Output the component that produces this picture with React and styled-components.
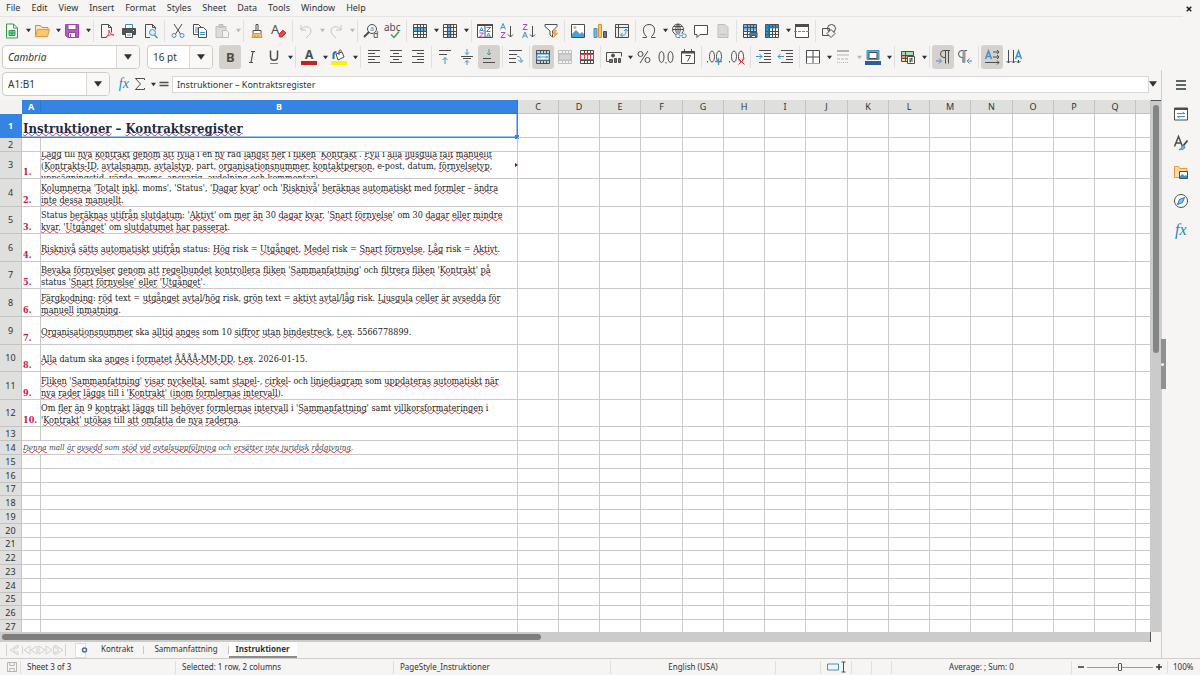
import React from 'react';
import styled, { createGlobalStyle, css } from 'styled-components';

const GlobalStyle = createGlobalStyle`
  *,
  *::before,
  *::after {
    box-sizing: border-box;
  }
  body {
    margin: 0;
    background: #f6f5f4;
    color: #2e3436;
    font: 9px/12px 'Noto Sans', 'Open Sans', sans-serif;
  }
  button,
  input,
  select {
    margin: 0;
    color: inherit;
    font: inherit;
  }
  svg {
    overflow: visible;
  }
`;

const BLUE = '#3584e4';
const INK = '#4d4d4d';
const SKY = '#3a94d0';

const Window = styled.div`
  display: flex;
  flex-direction: column;
  height: 100vh;
  overflow: hidden;
`;

const MenuBar = styled.header`
  display: flex;
  align-items: center;
  justify-content: space-between;
  flex: none;
  height: 17px;
  padding: 0 5px 0 0;
`;

const Menus = styled.nav`
  display: flex;
  flex: 1;
  align-self: stretch;
  gap: 11px;
  padding-left: 6px;
  border-bottom: 1px solid #e6e4e2;
`;

const MenuButton = styled.button`
  padding: 0;
  border: 0;
  background: none;
`;

const CloseButton = styled(MenuButton)`
  display: flex;
`;

const Toolbar = styled.div`
  display: flex;
  align-items: center;
  flex: none;
  height: ${(p) => p.$height}px;
  padding-left: 1px;
`;

const ToolButton = styled.button`
  display: flex;
  align-items: center;
  justify-content: center;
  flex: none;
  width: 22px;
  height: 24px;
  padding: 0;
  border: 0;
  border-radius: 3px;
  background: ${(p) => (p.$active ? '#d5d1cd' : 'none')};
`;

const DropButton = styled.button`
  display: flex;
  align-items: center;
  justify-content: flex-end;
  flex: none;
  width: 8px;
  height: 24px;
  padding: 0;
  border: 0;
  background: none;
  color: ${(p) => (p.disabled ? '#b8b8b8' : '#2e3436')};
`;

const Separator = styled.span`
  flex: none;
  width: 1px;
  height: 22px;
  margin: 0 2px;
  background: #e2e0de;
`;

const Combo = styled.div`
  display: flex;
  flex: none;
  width: ${(p) => p.$width}px;
  height: 24px;
  margin: 0 6px 0 1px;
  border: 1px solid #cfcbc7;
  border-radius: 4px;
  background: #fff;
  overflow: hidden;
`;

const ComboInput = styled.input`
  flex: 1;
  min-width: 0;
  padding: 0 0 0 5px;
  border: 0;
  outline: 0;
  background: none;
  font-size: 10px;
  font-style: ${(p) => (p.$italic ? 'italic' : 'normal')};
`;

const ComboArrow = styled.button`
  display: flex;
  align-items: center;
  justify-content: center;
  width: 23px;
  padding: 0;
  border: 0;
  border-left: 1px solid #dcd9d6;
  background: #f9f8f7;
`;

const Workspace = styled.div`
  display: flex;
  flex: 1;
  min-height: 0;
`;

const Main = styled.main`
  display: flex;
  flex: 1;
  flex-direction: column;
  min-width: 0;
`;

const FormulaBar = styled.div`
  display: flex;
  align-items: center;
  flex: none;
  height: 30px;
  padding: 0 4px 2px 1px;
`;

const FormulaButton = styled(ToolButton)`
  width: 16px;
`;

const FormulaInput = styled.input`
  flex: 1;
  min-width: 0;
  height: 17px;
  padding: 0 4px;
  border: 1px solid #dad8d6;
  outline: 0;
  background: #fff;
`;

const SheetArea = styled.div`
  display: flex;
  flex: 1;
  min-height: 0;
`;

const Grid = styled.div`
  flex: 1;
  min-width: 0;
  overflow: hidden;
  background: #fff;
`;

const Table = styled.table`
  width: 100%;
  border-collapse: separate;
  border-spacing: 0;
  table-layout: fixed;
`;

const headerCell = css`
  padding: 0;
  border: solid #c3c3c2;
  border-width: 0 1px 1px 0;
  background: #dfdfde;
  font-weight: 400;
`;

const ColumnHeader = styled.th`
  ${headerCell}
  height: 14px;
  ${(p) =>
    p.$selected &&
    css`
      border-color: #2f76cc;
      background: ${BLUE};
      color: #fff;
      font-weight: 700;
    `}
`;

const Corner = styled.td`
  padding: 0;
  background: #f3f2f1;
`;

const RowHeader = styled.th`
  ${headerCell}
  ${(p) =>
    p.$selected &&
    css`
      border-color: ${BLUE};
      background: ${BLUE};
      color: #fff;
      font-weight: 700;
    `}
`;

const Cell = styled.td`
  position: relative;
  padding: 0;
  border: solid #cacaca;
  border-width: 0 1px 1px 0;
  ${(p) =>
    p.$selected &&
    css`
      border-color: ${BLUE};
      box-shadow: inset -1px -1px #9cc3f2;
      &::after {
        content: '';
        position: absolute;
        right: -2px;
        bottom: -2px;
        width: 4px;
        height: 4px;
        background: ${BLUE};
      }
    `}
`;

const CellText = styled.div`
  display: flex;
  flex-direction: column;
  justify-content: ${(p) => p.$align || 'center'};
  height: ${(p) => p.$height}px;
  padding-top: 2px;
  overflow: hidden;
  color: #222;
  font-family: 'DejaVu Serif Condensed', 'DejaVu Serif', serif;
  font-size: 9px;
  line-height: 12px;
  white-space: nowrap;
  ${(p) =>
    p.$kind === 'title' &&
    css`
      padding-left: 1px;
      color: #1f2a44;
      font-size: 13px;
      font-weight: 700;
      line-height: 17px;
    `}
  ${(p) =>
    p.$kind === 'number' &&
    css`
      padding-left: 1px;
      color: #c8203f;
      font-weight: 700;
    `}
  ${(p) =>
    p.$kind === 'note' &&
    css`
      padding-left: 1px;
      color: #3d4a5c;
      font-size: 8px;
      font-style: italic;
    `}
`;

const Misspelled = styled.span`
  text-decoration: underline wavy #e0343a 1px;
  text-decoration-skip-ink: none;
  text-underline-offset: -1px;
`;

const OverflowMark = styled.span`
  position: absolute;
  top: 11px;
  right: -1px;
  border: solid transparent;
  border-width: 2px 0 2px 3px;
  border-left-color: #6b1420;
`;

const VerticalTrack = styled.div`
  flex: none;
  width: 10px;
  padding: 4px 2px 0;
  background: #cbcbcb;
  border-top: 1px solid #555;
`;

const VerticalThumb = styled.div`
  height: 47%;
  border-radius: 3px;
  background: #838584;
`;

const HorizontalTrack = styled.div`
  flex: none;
  height: 10px;
  margin-right: 10px;
  padding: 2px;
  background: #cbcbcb;
  border-right: 1px solid #555;
`;

const HorizontalThumb = styled.div`
  width: 47%;
  height: 6px;
  border-radius: 3px;
  background: #7c7e7d;
`;

const TabBar = styled.div`
  display: flex;
  flex: none;
  height: 16px;
  padding-left: 5px;
`;

const TabNav = styled.button`
  display: flex;
  align-items: center;
  flex: none;
  width: ${(p) => p.$width}px;
  padding: 0;
  border: 0;
  background: none;
`;

const SheetTab = styled.button`
  padding: 0 ${(p) => (p.$active ? 7 : 10)}px;
  border: 0;
  border-bottom: 2px solid ${(p) => (p.$active ? '#8c8c8c' : 'transparent')};
  background: ${(p) => (p.$active ? '#fff' : 'none')};
  font-size: 8px;
  font-weight: ${(p) => (p.$active ? 700 : 400)};
`;

const TabDivider = styled.span`
  width: 1px;
  margin: 4px 0;
  background: #c8c6c4;
`;

const Sidebar = styled.aside`
  position: relative;
  display: flex;
  flex: none;
  flex-direction: column;
  align-items: center;
  gap: 5px;
  width: 39px;
  padding: 3px 0 0;
  border-left: 1px solid #d0cecc;
`;

const SidebarHandle = styled.button`
  position: absolute;
  top: 269px;
  left: -1px;
  display: flex;
  align-items: center;
  width: 5px;
  height: 50px;
  padding: 0;
  border: 0;
  background: #8f9190;
  &::after {
    content: '';
    width: 3px;
    height: 3px;
    border-radius: 50%;
    background: #fff;
  }
`;

const StatusBar = styled.footer`
  display: flex;
  align-items: center;
  flex: none;
  height: 17px;
  border-top: 1px solid #cfcdcb;
  font-size: 8px;
`;

const StatusField = styled.div`
  display: flex;
  align-items: center;
  justify-content: ${(p) => (p.$center ? 'center' : 'flex-start')};
  flex: ${(p) => p.$grow || 0} 1 ${(p) => p.$width}px;
  height: 13px;
  padding-left: ${(p) => (p.$center ? 0 : 6)}px;
  border-right: 1px solid #e0dedc;
  white-space: nowrap;
`;

const ZoomControl = styled.div`
  display: flex;
  align-items: center;
  padding: 0 2px 0 3px;
`;

const ZoomStep = styled.button`
  display: flex;
  padding: 0;
  border: 0;
  background: none;
`;

const ZoomSlider = styled.input`
  width: 66px;
  height: 12px;
  appearance: none;
  background: linear-gradient(#999, #999) center / 100% 1px no-repeat;
  &::-webkit-slider-thumb {
    width: 4px;
    height: 8px;
    appearance: none;
    border: 1px solid #555;
    border-radius: 1px;
    background: #f6f5f4;
  }
`;

const ZoomValue = styled.output`
  width: 33px;
  padding-left: 5px;
  border-left: 1px solid #e0dedc;
`;

const gridLines = (
  <path d="M1.5 1.5h13v13h-13z M1.5 4.5h13 M1.5 8.5h13 M1.5 11.5h13 M5.5 1.5v13 M8.5 1.5v13 M11.5 1.5v13" />
);
const mergeGrid = (
  <path d="M1.5 1.5h13v13h-13z M1.5 4.5h13 M1.5 11.5h13 M5.5 1.5v3 M8.5 1.5v3 M11.5 1.5v3 M5.5 11.5v3 M8.5 11.5v3 M11.5 11.5v3" />
);

const Letter = ({ x, y, size = 8, fill = INK, children, ...rest }) => (
  <text x={x} y={y} fontSize={size} fill={fill} stroke="none" {...rest}>
    {children}
  </text>
);

const icons = {
  new: (
    <>
      <path d="M2.5 1h7l4 4v10h-11z" fill="#fff" stroke="#2aa148" />
      <path d="M9.500 1v4h4" stroke="#2aa148" />
      <path d="M5 7.500h6v5H5z M5 10h6 M8 7.500v5" stroke="#2aa148" fill="#8bd6a0" />
    </>
  ),
  open: (
    <>
      <path d="M1.500 13.500V2.500h5l1.500 2h6v3" stroke="#e08a25" fill="#fbe3bd" />
      <path d="M1.500 13.500l2-7h12l-2 7z" stroke="#e8973a" fill="#fcc56f" />
    </>
  ),
  save: (
    <>
      <path d="M1.500 1.500h13v13h-11l-2-2z" fill="#b45cc4" stroke="#9a45ab" />
      <path d="M4 1.500h8v5H4z" fill="#fff" stroke="#9a45ab" />
      <path d="M4.500 9.500h7v5h-7z" fill="#fff" stroke="#9a45ab" />
      <path d="M6.500 11v3" stroke="#9a45ab" />
    </>
  ),
  pdf: (
    <>
      <path d="M2.500 14.500v-13h7l3 3v5 M9.500 1.500v3h3 M2.500 14.500h5" />
      <path d="M7 14c2-1 4-5 3-7-1 1 2 5 5 5-2-1-5 0-8 2z" stroke="#e03c46" />
    </>
  ),
  print: (
    <>
      <path d="M4.500 5V1.500h7V5" fill="#fff" stroke="#3a8cc4" />
      <path d="M1.500 5.500h13v6h-13z" fill="#555" />
      <path d="M4.500 9.500h7v5h-7z" fill="#fff" />
      <path d="M6 12h4" stroke={SKY} />
      <path d="M12 7.500h1" stroke="#fff" />
    </>
  ),
  preview: (
    <>
      <path d="M7 14.500H2.500v-13h7l3 3v2 M9.500 1.500v3h3" />
      <circle cx="9.500" cy="9.500" r="3" stroke={SKY} fill="#d7ebf7" />
      <path d="M11.500 12l3 3" stroke={SKY} strokeWidth="1.500" />
    </>
  ),
  cut: (
    <>
      <path d="M4 1l6.500 10 M12 1L5.500 11" />
      <circle cx="4" cy="12.500" r="2" stroke={SKY} />
      <circle cx="12" cy="12.500" r="2" stroke={SKY} />
    </>
  ),
  copy: (
    <>
      <path d="M1.500 1.500h5l3 3v7h-8z" fill="#fff" />
      <path d="M6.500 4.500h5l3 3v7h-8z" fill="#fff" />
      <path d="M3 5h3 M3 7h3 M3 9h3 M8 9.500h5 M8 11.500h5" stroke={SKY} />
    </>
  ),
  paste: (
    <g stroke="#bdbdbd">
      <path d="M2 3.500h10v11H2z" fill="#dcdcdc" />
      <path d="M5 1.500h4v3H5z" fill="#ccc" />
      <path d="M8.500 7.500h4l2 2v5h-6z" fill="#f3f3f3" />
    </g>
  ),
  brush: (
    <>
      <path d="M7 1.500h2v6H7z M4 7.500h8v3H4z" fill="#fff" />
      <path d="M4 10.500h8l1 4H3z" fill="#fbc26c" stroke="#e28f32" />
      <path d="M6 14v-2 M9 14v-2" stroke="#e28f32" />
    </>
  ),
  clear: (
    <>
      <Letter x="0" y="11" size="13">A</Letter>
      <path d="M8 11l4-4 3 3-4 4H8.500z" fill="#e8434d" stroke="#d9333d" />
    </>
  ),
  undo: <path d="M3 2v5h5 M3 7c3-5 10-4 10 1 0 3-2 4-5 7" stroke="#c4c4c4" />,
  redo: <path d="M13 2v5H8 M13 7c-3-5-10-4-10 1 0 3 2 4 5 7" stroke="#c4c4c4" />,
  find: (
    <>
      <circle cx="9" cy="6" r="4.500" />
      <path d="M6 9l-5 5" strokeWidth="2" />
      <Letter x="7" y="8" size="7" fill={SKY}>a</Letter>
      <Letter x="10" y="15" size="9">d</Letter>
    </>
  ),
  spell: (
    <>
      <Letter x="-1" y="8" size="10">abc</Letter>
      <path d="M6 11.500l3 3 5-6" stroke="#35a853" strokeWidth="1.500" />
    </>
  ),
  rows: (
    <>
      <path d="M1.500 4.500h13v4h-13z" fill="#5aaee6" stroke="none" />
      {gridLines}
    </>
  ),
  columns: (
    <>
      <path d="M5.500 1.500h4v13h-4z" fill="#5aaee6" stroke="none" />
      {gridLines}
    </>
  ),
  sort: (
    <>
      <path d="M.5 1.500h15v13H.5z M8 2v12" fill="#fff" />
      <path d="M0 2h16" strokeWidth="2" />
      <path d="M2.500 8.500l2-4 2 4 M3 7.500h3 M9.500 14l2-4 2 4 M10 13h3" stroke={SKY} />
      <path d="M9.500 4.500h4l-4 4h4 M2.500 10h4l-4 4h4" stroke="#b43fc0" />
    </>
  ),
  az: (
    <>
      <path d="M1.500 6.500l2.500-6 2.500 6 M2.500 4.500h3" stroke={SKY} />
      <path d="M2 9.500h4l-4 5h4.500" stroke="#b43fc0" />
      <path d="M11.500 3v11 M9 11.500l2.500 2.500 2.500-2.500" />
    </>
  ),
  za: (
    <>
      <path d="M2 1.500h4l-4 5h4.500" stroke="#b43fc0" />
      <path d="M1.500 15l2.500-6 2.500 6 M2.500 13h3" stroke={SKY} />
      <path d="M11.500 3v11 M9 11.500l2.500 2.500 2.500-2.500" />
    </>
  ),
  filter: (
    <>
      <path d="M2 1.500h12v2L9.500 8v6L7 12V8L2 3.500z" fill="#fff" />
      <path d="M12 7l-3 4h3l-2 4 5-5h-3l1.500-3z" fill="#f7a83c" stroke="#e8912c" strokeWidth=".5" />
    </>
  ),
  image: (
    <>
      <path d="M1.500 1.500h13v13h-13z" fill="#fff" />
      <path d="M2 14v-3l4-4 4 4 2-2 2 2v3z" fill="#4a9fd8" stroke="none" />
      <circle cx="5" cy="4.500" r="1.500" fill="#fbb040" stroke="none" />
    </>
  ),
  chart: (
    <>
      <path d="M2 5.500h3v9H2z" fill="#7ab8e4" stroke={SKY} />
      <path d="M6.500 1.500h3v13h-3z" fill="#fbc26c" stroke="#e8912c" />
      <path d="M11.500 8.500h3v6h-3z" fill="#777" />
    </>
  ),
  pivot: (
    <>
      <path d="M1.500 1.500h13v13h-13z M1.500 4.500h13 M4.500 1.500v13" fill="#eee" />
      <path d="M7 12c4 1 5-1 5-5 M10 8l2-2 2 2 M8.500 10l-2 2 2 2" stroke={SKY} />
    </>
  ),
  omega: <path d="M1.500 14.500h4v-1C1 10 1 1.500 8 1.500S15 10 10.500 13.500v1h4" />,
  link: (
    <>
      <circle cx="7" cy="6.500" r="5.500" />
      <path d="M1.500 6.500h11 M7 1v11 M3 3.500h8 M7 1c-3 3-3 8 0 11 M7 1c3 3 3 8 0 11" />
      <path d="M5 10.500h10v4.500H5z" fill="#f6f5f4" stroke="none" />
      <path d="M9 11H6.500a1.500 1.500 0 000 3.500H9 M11 11h2.500a1.500 1.500 0 010 3.500H11 M8 12.800h4" stroke={SKY} />
    </>
  ),
  comment: <path d="M1.500 2.500h13v9H7l-3 3v-3H1.500z" fill="#fff" />,
  footer: (
    <g stroke="#bdbdbd">
      <path d="M3 1.500h7l3 3v10H3z" fill="#d9d9d9" />
      <path d="M5 11.500h6" />
    </g>
  ),
  printArea: (
    <>
      <path d="M1.500 1.500h13v6h-13z" fill="#6fb4e6" stroke="none" />
      {gridLines}
      <path d="M8 9.500h7v5H8z" fill="#4f7ca8" stroke="#3d5d7c" />
      <path d="M9.500 12.500h4v2h-4z" fill="#fff" stroke="#3d5d7c" />
    </>
  ),
  freeze: (
    <>
      <path d="M1.500 1.500h13v3h-10v10h-3z" fill="#3a94d0" stroke="none" />
      {gridLines}
      <path d="M1 4.500h14 M4.500 1v14" stroke="#2075b8" strokeWidth="1.500" />
    </>
  ),
  split: (
    <>
      <path d="M1.500 1.500h13v13h-13z" fill="#fff" />
      <path d="M1 2.500h14" strokeWidth="3" />
      <path d="M0 8.500h16" stroke={SKY} strokeDasharray="3 1" />
    </>
  ),
  shapes: (
    <>
      <path d="M1.500 5.500h7v7h-7z" />
      <circle cx="10.500" cy="5.500" r="4" />
      <path d="M10 6.500l4 4-4 4-4-4z" fill="#f6f5f4" />
    </>
  ),
  bold: <Letter x="4" y="13" size="13" fontWeight="700">B</Letter>,
  italic: <path d="M7 2.500h4 M5 13.500h4 M9 2.500l-2 11" strokeWidth="1.200" />,
  underline: (
    <>
      <path d="M4.500 1.500v6c0 5 7 5 7 0v-6" strokeWidth="1.500" />
      <path d="M4 14.500h8" stroke={SKY} />
    </>
  ),
  fontColor: (
    <>
      <Letter x="4" y="10" size="12" fontWeight="700">A</Letter>
      <path d="M0 14h16" stroke="#c9211e" strokeWidth="4" />
    </>
  ),
  highlight: (
    <>
      <path d="M5 5l6-2 2 5-6 3z" fill="#fff" />
      <path d="M8 6V2c1-2 3-1 2 1" />
      <path d="M2.500 10V6c0-2 1-3 3-3" stroke="#2075b8" strokeWidth="2" />
      <path d="M0 14h16" stroke="#fff200" strokeWidth="4" />
    </>
  ),
  left: <path d="M2 1.500h12 M2 4.500h7 M2 7.500h12 M2 10.500h7 M2 13.500h12" />,
  center: <path d="M2 1.500h12 M5 4.500h6 M2 7.500h12 M5 10.500h6 M2 13.500h12" />,
  right: <path d="M2 1.500h12 M7 4.500h7 M2 7.500h12 M7 10.500h7 M2 13.500h12" />,
  top: (
    <>
      <path d="M2 1.500h12 M2 5.500h8" />
      <path d="M8 15V8.500 M5.500 11L8 8.500l2.500 2.500" stroke={SKY} />
    </>
  ),
  middle: (
    <>
      <path d="M2 7.500h12 M4 9.500h8" />
      <path d="M8 0v5.500 M6 3.500l2 2 2-2 M8 16v-4.500 M6 13.500l2-2 2 2" stroke={SKY} />
    </>
  ),
  bottom: (
    <>
      <path d="M2 13.500h12 M2 9.500h8" />
      <path d="M8 0v6 M6 4l2 2 2-2" stroke={SKY} />
    </>
  ),
  wrap: (
    <>
      <path d="M1 1.500h13 M1 5.500h8 M1 9.500h7 M1 13.500h7" />
      <path d="M9 7.500c3 0 4 1 4 5 M10.500 11l2.500 2.500 2-2.500" stroke={SKY} />
    </>
  ),
  merge: (
    <>
      {mergeGrid}
      <path d="M2 5h12v6H2z" fill="#fff" stroke={SKY} />
      <path d="M3 8h10 M5 6.500L3.500 8 5 9.500 M11 6.500L12.500 8 11 9.500" stroke={SKY} />
    </>
  ),
  mergeCells: (
    <g stroke="#c0c0c0">
      {mergeGrid}
      <path d="M2 5h12v6H2z" fill="#d4d4d4" />
    </g>
  ),
  unmerge: (
    <>
      {mergeGrid}
      <path d="M1.500 5.500h13v5h-13z M5.500 5v6 M8.500 5v6 M11.500 5v6" stroke="#e0434a" fill="#fff" />
    </>
  ),
  currency: (
    <>
      <path d="M4 12.500H.5v-9h15v4" />
      <circle cx="7" cy="6.500" r="1.500" fill={INK} />
      <path d="M3.500 10.500h3v3h-3z M8.500 9.500h2v4h-2z M12.500 9.500h2v4h-2z" fill="#777" />
    </>
  ),
  percent: (
    <>
      <circle cx="4.500" cy="5" r="2.500" />
      <circle cx="11.500" cy="11" r="2.500" />
      <path d="M12 2L4 14" />
    </>
  ),
  number: (
    <>
      <ellipse cx="3.500" cy="8" rx="2.500" ry="5.500" />
      <ellipse cx="12.500" cy="8" rx="2.500" ry="5.500" />
      <path d="M8 13v1.500" />
    </>
  ),
  date: (
    <>
      <path d="M1.500 2.500h13v12h-13z" fill="#fff" />
      <path d="M1.500 3.500h13" strokeWidth="2" />
      <path d="M4.500 0v3 M11.500 0v3 M5.500 6.500h5l-3 6" />
    </>
  ),
  addDecimal: (
    <>
      <ellipse cx="5" cy="7.500" rx="2.500" ry="5.500" />
      <ellipse cx="12" cy="7.500" rx="2.500" ry="5.500" />
      <path d="M.5 12v1.500" />
      <path d="M8 12.500h7 M11.500 9v7" stroke={SKY} strokeWidth="1.300" />
    </>
  ),
  removeDecimal: (
    <>
      <ellipse cx="5" cy="7.500" rx="2.500" ry="5.500" />
      <ellipse cx="12" cy="7.500" rx="2.500" ry="5.500" />
      <path d="M.5 12v1.500" />
      <path d="M9.500 9.500l6 6 M15.500 9.500l-6 6" stroke="#e0343a" />
    </>
  ),
  indent: (
    <>
      <path d="M3 1.500h12 M8 4.500h7 M8 7.500h7 M8 10.500h7 M3 13.500h12" />
      <path d="M0 7.500h6 M3.500 5L6 7.500 3.500 10" stroke={SKY} />
    </>
  ),
  outdent: (
    <>
      <path d="M3 1.500h12 M8 4.500h7 M8 7.500h7 M8 10.500h7 M3 13.500h12" />
      <path d="M0 7.500h6 M2.500 5L0 7.500 2.500 10" stroke={SKY} />
    </>
  ),
  borders: (
    <>
      <path d="M1.500 14.500v-13h13v13 M8 1.500v13 M1.500 8h13" fill="#fff" />
      <path d="M1.500 14.500h13" stroke="#e8973a" />
    </>
  ),
  lineStyle: (
    <g stroke="#b3b3b3">
      <path d="M2 2h12" strokeWidth="2" />
      <path d="M2 6h12" />
      <path d="M2 10h12" strokeDasharray="3 1" />
      <path d="M2 13.500h12" strokeDasharray="1 1" />
    </g>
  ),
  lineColor: (
    <>
      <path d="M2 1.500h12v9H2z" fill="#5aaee6" stroke={SKY} />
      <path d="M4 3.500h8v6H4z" fill="#fff" />
      <path d="M0 14h16" stroke="#2a6099" strokeWidth="4" />
    </>
  ),
  conditional: (
    <>
      <path d="M1.500 2.500h12v4h-12z" fill="#9fe0ac" />
      <path d="M1.500 6.500h12v3h-12z" fill="#f58f88" />
      <path d="M1.500 9.500h6v3h-6z" fill="#fce08a" />
      <path d="M5.500 2.500v10" />
      <path d="M7.500 7.500h7v7h-7z M9 10h4 M9 12h4 M12 8.500l-2 5" fill="#fff" />
    </>
  ),
  ltr: (
    <>
      <path d="M15 1.500H9a3.500 3.500 0 000 7h1 M10.500 1.500v13 M13.500 1.500v13" />
      <path d="M1 12h5 M4 9.500L6.500 12 4 14.500" stroke={SKY} />
    </>
  ),
  rtl: (
    <>
      <path d="M10 1.500H5a3.500 3.500 0 000 7h1v5" />
      <path d="M6 1.500h2v12H6z" fill="#999" stroke="#999" />
      <path d="M15 12h-5 M12.500 9.500L10 12l2.500 2.500" stroke={SKY} />
    </>
  ),
  horizontalText: (
    <>
      <path d="M1.500 10l3-8 3 8 M2.500 7.500h4" stroke={SKY} strokeWidth="1.500" />
      <path d="M9 3h6 M13 1l2 2-2 2 M9 8h6 M13 6l2 2-2 2 M1 13.500h14 M13 11.500l2 2-2 2" />
    </>
  ),
  verticalText: (
    <>
      <path d="M2.500 1v13 M.5 12l2 2 2-2 M7.500 1v13 M5.500 12l2 2 2-2 M12.500 11v3 M10.500 12l2 2 2-2" />
      <path d="M9.500 10l3-8 3 8 M10.500 7.500h4" stroke={SKY} strokeWidth="1.500" />
    </>
  ),
  fx: (
    <Letter x="2" y="13" size="16" fill="#2b84c6" fontStyle="italic" fontFamily="Liberation Serif, serif">
      fx
    </Letter>
  ),
  sigma: <path d="M12.500 4V2.500h-9l5 5.500-5 5.500h9V12" />,
  equals: <path d="M3.500 6.500h9 M3.500 9.500h9" strokeWidth="1.500" />,
  menu: <path d="M3 4h10 M3 8h10 M3 12h10" stroke="#2e3436" strokeWidth="1.500" />,
  properties: (
    <>
      <path d="M1.500 2h13v12h-13z" fill="#fff" />
      <path d="M1.500 3h13" strokeWidth="2" />
      <path d="M4 7.500h8 M9.500 6l2 1.500 M4 10.500h8 M6.500 12l-2-1.500" stroke={SKY} />
    </>
  ),
  styles: (
    <>
      <path d="M1.500 11.500l4-10 4 10 M3 8h5" strokeWidth="1.500" />
      <path d="M14.500 5.500l-4 5" strokeWidth="2" />
      <path d="M6 14.500c3 0 2-3 4-4l2 1.500c0 2-3 3-6 2.500z" fill="#6fb4e6" stroke={SKY} />
    </>
  ),
  gallery: (
    <>
      <path d="M1.500 13.500V2.500h4l1.500 2h7v9z" fill="#fcd9a0" stroke="#e8973a" />
      <path d="M6.500 7.500h8v7h-8z" fill="#fff" />
      <path d="M7 14v-2l2.500-2 2 2 1.500-1 1 1v2z" fill="#3a94d0" stroke="none" />
    </>
  ),
  navigator: (
    <>
      <circle cx="8" cy="8" r="6.500" fill="#fff" />
      <path d="M11.500 4.500L9.500 9.500l-5 2 2-5z" fill="#8cc6ec" stroke="#2075b8" />
    </>
  ),
  close: <path d="M5 5l6 6 M11 5l-6 6" stroke="#1c1c1c" strokeWidth="2" />,
  addSheet: (
    <>
      <path d="M.5 1.500h10v14H.5z" fill="#fff" stroke="#ddd" />
      <circle cx="9.500" cy="8" r="2" fill="#fff" stroke="#3d6fb0" strokeWidth="1.500" />
    </>
  ),
  saveStatus: <path d="M2 2h12v12H2z M5 2v4h6V2 M5 14v-4h6v4" stroke="#a0a0a0" />,
  minus: <path d="M4 8h8" stroke="#2e3436" strokeWidth="2" />,
  plus: <path d="M4 8h8 M8 4v8" stroke="#2e3436" strokeWidth="2" />,
};

const Icon = ({ name, size = 16 }) => (
  <svg
    width={size}
    height={size}
    viewBox="0 0 16 16"
    fill="none"
    stroke={INK}
    fontFamily="Noto Sans, sans-serif"
    aria-hidden="true"
  >
    {icons[name]}
  </svg>
);

const Caret = ({ size = 5 }) => (
  <svg width={size} height={size} viewBox="0 0 6 6" aria-hidden="true">
    <path d="M0 1h6L3 5z" fill="currentColor" />
  </svg>
);

// '|' separates groups, '*' adds a drop-down, '!' is pressed, '-' is disabled
const standardTools =
  'new* open* save* | pdf print preview | cut copy paste*- | brush clear | undo*- redo*- | find spell | rows* columns* | sort az za filter | image chart pivot | omega* link comment footer | printArea freeze* split | shapes';
const formattingTools =
  'bold! italic underline* | fontColor* highlight* | left center right | top middle bottom! | wrap | merge! mergeCells unmerge | currency* percent number date | addDecimal removeDecimal | indent outdent | borders* lineStyle*- lineColor* | conditional* | ltr! rtl | horizontalText! verticalText';

const Tools = ({ items }) =>
  items.split(' ').map((item, i) => {
    if (item === '|') return <Separator key={i} />;
    const name = item.replace(/[*!-]/g, '');
    const disabled = item.includes('-');
    return (
      <React.Fragment key={i}>
        <ToolButton
          type="button"
          aria-label={name}
          disabled={disabled}
          $active={item.includes('!')}
        >
          <Icon name={name} />
        </ToolButton>
        {item.includes('*') && (
          <DropButton type="button" aria-label={`${name} options`} disabled={disabled}>
            <Caret />
          </DropButton>
        )}
      </React.Fragment>
    );
  });

const ComboBox = ({ label, value, width, italic }) => (
  <Combo $width={width}>
    <ComboInput aria-label={label} defaultValue={value} $italic={italic} />
    <ComboArrow type="button" aria-label={`${label} list`}>
      <Caret size={8} />
    </ComboArrow>
  </Combo>
);

const knownWords = new Set(
  'till i en rad moms status och med om som text risk ska samt datum mall de part e-post'.split(' ')
);

const SpellChecked = ({ text }) =>
  text.split(/(t\.ex|[\p{L}]+(?:-\p{L}+)*)/u).map((part, i) =>
    i % 2 && !knownWords.has(part.toLowerCase()) ? (
      <Misspelled key={i}>{part}</Misspelled>
    ) : (
      part
    )
  );

const instructions = [
  [
    "Lägg till nya kontrakt genom att fylla i en ny rad längst ner i fliken 'Kontrakt'. Fyll i alla ljusgula fält manuellt",
    '(Kontrakts-ID, avtalsnamn, avtalstyp, part, organisationsnummer, kontaktperson, e-post, datum, förnyelsetyp,',
    'uppsägningstid, värde, moms, ansvarig, avdelning och kommentar).',
  ],
  [
    "Kolumnerna 'Totalt inkl. moms', 'Status', 'Dagar kvar' och 'Risknivå' beräknas automatiskt med formler – ändra",
    'inte dessa manuellt.',
  ],
  [
    "Status beräknas utifrån slutdatum: 'Aktivt' om mer än 30 dagar kvar, 'Snart förnyelse' om 30 dagar eller mindre",
    "kvar, 'Utgånget' om slutdatumet har passerat.",
  ],
  [
    'Risknivå sätts automatiskt utifrån status: Hög risk = Utgånget, Medel risk = Snart förnyelse, Låg risk = Aktivt.',
  ],
  [
    "Bevaka förnyelser genom att regelbundet kontrollera fliken 'Sammanfattning' och filtrera fliken 'Kontrakt' på",
    "status 'Snart förnyelse' eller 'Utgånget'.",
  ],
  [
    'Färgkodning: röd text = utgånget avtal/hög risk, grön text = aktivt avtal/låg risk. Ljusgula celler är avsedda för',
    'manuell inmatning.',
  ],
  ['Organisationsnummer ska alltid anges som 10 siffror utan bindestreck, t.ex. 5566778899.'],
  ['Alla datum ska anges i formatet ÅÅÅÅ-MM-DD, t.ex. 2026-01-15.'],
  [
    "Fliken 'Sammanfattning' visar nyckeltal, samt stapel-, cirkel- och linjediagram som uppdateras automatiskt när",
    "nya rader läggs till i 'Kontrakt' (inom formlernas intervall).",
  ],
  [
    "Om fler än 9 kontrakt läggs till behöver formlernas intervall i 'Sammanfattning' samt villkorsformateringen i",
    "'Kontrakt' utökas till att omfatta de nya raderna.",
  ],
];

const columns = 'ABCDEFGHIJKLMNOPQ'.split('');
const columnWidths = [19, 477, 41, 41, 41, 42, 41, 41, 41, 42, 41, 41, 41, 42, 41, 41, 41];
const rowHeights = [
  24, 14, 27, 28, 27, 28, 27, 28, 28, 27, 28, 27, 14, 14, 14, 14, 13, 14, 14, 14, 13, 14, 14, 14,
  13, 14, 14,
];

const RowCells = ({ row, height }) => {
  const inner = height - 1;
  if (row === 1 || row === 14) {
    return (
      <Cell colSpan={2} $selected={row === 1}>
        <CellText $height={inner} $kind={row === 1 ? 'title' : 'note'} $align="flex-end">
          <div>
            <SpellChecked
              text={
                row === 1
                  ? 'Instruktioner – Kontraktsregister'
                  : 'Denna mall är avsedd som stöd vid avtalsuppföljning och ersätter inte juridisk rådgivning.'
              }
            />
          </div>
        </CellText>
      </Cell>
    );
  }
  const lines = instructions[row - 3];
  if (!lines) {
    return (
      <>
        <Cell />
        <Cell />
      </>
    );
  }
  return (
    <>
      <Cell>
        <CellText $height={inner} $kind="number" $align="flex-end">
          {row - 2}.
        </CellText>
      </Cell>
      <Cell>
        <CellText $height={inner}>
          {lines.map((line) => (
            <div key={line}>
              <SpellChecked text={line} />
            </div>
          ))}
        </CellText>
        {lines.length > 2 && <OverflowMark />}
      </Cell>
    </>
  );
};

const Spreadsheet = () => (
  <Table>
    <colgroup>
      <col width="22" />
      {columnWidths.map((width, i) => (
        <col key={i} width={width} />
      ))}
      <col />
    </colgroup>
    <thead>
      <tr>
        <Corner />
        {columns.map((name, i) => (
          <ColumnHeader key={name} scope="col" $selected={i < 2}>
            {name}
          </ColumnHeader>
        ))}
        <ColumnHeader />
      </tr>
    </thead>
    <tbody>
      {rowHeights.map((height, i) => (
        <tr key={i} height={height}>
          <RowHeader scope="row" $selected={i === 0}>
            {i + 1}
          </RowHeader>
          <RowCells row={i + 1} height={height} />
          {columns.slice(1).map((name) => (
            <Cell key={name} />
          ))}
        </tr>
      ))}
    </tbody>
  </Table>
);

const TabArrows = () => (
  <svg width="62" height="12" viewBox="0 0 62 12" fill="none" stroke="#d2d2d2" aria-hidden="true">
    <path d="M1.500 0v12 M13 1L5 6l8 5V8H9V4h4z M17.500 2v8 M25 2l-6 4 6 4z M32 2l-6 4 6 4z M34 2l6 4-6 4z M41 2l6 4-6 4z M48.500 2v8 M50 1l8 5-8 5V8h3V4h-3z M60.500 0v12" />
  </svg>
);

const App = () => (
  <>
    <GlobalStyle />
    <Window>
      <MenuBar>
        <Menus>
          {[
            'File',
            'Edit',
            'View',
            'Insert',
            'Format',
            'Styles',
            'Sheet',
            'Data',
            'Tools',
            'Window',
            'Help',
          ].map((name) => (
            <MenuButton type="button" key={name}>
              {name}
            </MenuButton>
          ))}
        </Menus>
        <CloseButton type="button" aria-label="Close">
          <Icon name="close" size={12} />
        </CloseButton>
      </MenuBar>
      <Toolbar $height={27}>
        <Tools items={standardTools} />
      </Toolbar>
      <Toolbar $height={26}>
        <ComboBox label="Font name" value="Cambria" width={138} italic />
        <ComboBox label="Font size" value="16 pt" width={66} />
        <Tools items={formattingTools} />
      </Toolbar>
      <Workspace>
        <Main>
          <FormulaBar>
            <ComboBox label="Name box" value="A1:B1" width={108} />
            <FormulaButton type="button" aria-label="Function wizard">
              <Icon name="fx" size={14} />
            </FormulaButton>
            <FormulaButton type="button" aria-label="Select function">
              <Icon name="sigma" />
            </FormulaButton>
            <DropButton type="button" aria-label="Functions">
              <Caret />
            </DropButton>
            <FormulaButton type="button" aria-label="Formula">
              <Icon name="equals" />
            </FormulaButton>
            <FormulaInput
              aria-label="Input line"
              defaultValue="Instruktioner – Kontraktsregister"
            />
            <DropButton type="button" aria-label="Expand formula bar">
              <Caret size={8} />
            </DropButton>
          </FormulaBar>
          <SheetArea>
            <Grid>
              <Spreadsheet />
            </Grid>
            <VerticalTrack>
              <VerticalThumb />
            </VerticalTrack>
          </SheetArea>
          <HorizontalTrack>
            <HorizontalThumb />
          </HorizontalTrack>
          <TabBar>
            <TabNav type="button" aria-label="Scroll sheets" $width={70}>
              <TabArrows />
            </TabNav>
            <TabNav type="button" aria-label="Add sheet" $width={16}>
              <Icon name="addSheet" />
            </TabNav>
            <SheetTab type="button">Kontrakt</SheetTab>
            <TabDivider />
            <SheetTab type="button">Sammanfattning</SheetTab>
            <TabDivider />
            <SheetTab type="button" $active>
              Instruktioner
            </SheetTab>
          </TabBar>
        </Main>
        <Sidebar>
          <SidebarHandle type="button" aria-label="Hide sidebar" />
          {['menu', 'properties', 'styles', 'gallery', 'navigator', 'fx'].map((name) => (
            <ToolButton type="button" key={name} aria-label={name}>
              <Icon name={name} />
            </ToolButton>
          ))}
        </Sidebar>
      </Workspace>
      <StatusBar>
        <StatusField $width={21}>
          <Icon name="saveStatus" size={12} />
        </StatusField>
        <StatusField $width={155}>Sheet 3 of 3</StatusField>
        <StatusField $width={218} $grow={1}>
          Selected: 1 row, 2 columns
        </StatusField>
        <StatusField $width={217}>PageStyle_Instruktioner</StatusField>
        <StatusField $width={165} $center>
          English (USA)
        </StatusField>
        <StatusField $width={45} />
        <StatusField $width={31} $center>
          <svg width="18" height="12" viewBox="0 0 18 12" fill="none" aria-hidden="true">
            <path d="M.5 3h11v6H.5z" stroke={SKY} />
            <path d="M14.500 1h4 M16.500 1v10 M14.500 11h4" stroke={INK} />
          </svg>
        </StatusField>
        <StatusField $width={20} />
        <StatusField $width={20} />
        <StatusField $width={180} $center>
          Average: ; Sum: 0
        </StatusField>
        <ZoomControl>
          <ZoomStep type="button" aria-label="Zoom out">
            <Icon name="minus" size={12} />
          </ZoomStep>
          <ZoomSlider type="range" aria-label="Zoom" min="0" max="100" defaultValue="50" />
          <ZoomStep type="button" aria-label="Zoom in">
            <Icon name="plus" size={12} />
          </ZoomStep>
        </ZoomControl>
        <ZoomValue>100%</ZoomValue>
      </StatusBar>
    </Window>
  </>
);

export default App;
